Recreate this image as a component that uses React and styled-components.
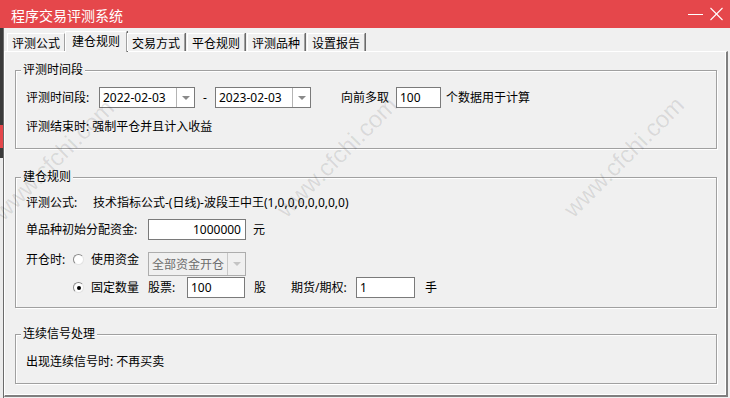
import React from 'react';
import styled, { createGlobalStyle } from 'styled-components';

const Global = createGlobalStyle`
  html, body { margin: 0; padding: 0; background: #f0f0f0; }
  body {
    font-family: "Noto Sans", "Noto Sans CJK SC", sans-serif;
    font-size: 12px;
    color: #000;
  }
  * { box-sizing: border-box; }
`;

const Window = styled.div`
  position: relative;
  width: 730px;
  height: 398px;
  overflow: hidden;
  background: #f0f0f0;
  display: flex;
  flex-direction: column;
`;

const TitleBar = styled.div`
  height: 28px;
  flex: none;
  background: #e5474b;
  display: flex;
  align-items: center;
  padding-left: 11px;
  color: #fff;
`;

const Title = styled.div`
  flex: 1;
  font-family: "Noto Sans CJK SC", sans-serif;
  font-size: 14px;
  line-height: 28px;
  padding-top: 1px;
`;

const Controls = styled.div`
  display: flex;
  align-items: center;
  gap: 6px;
  padding-right: 7px;
`;

const Body = styled.div`
  flex: 1;
  display: flex;
  min-height: 0;
`;

const LeftStrip = styled.div`
  width: 4px;
  flex: none;
  border-right: 1px solid #6b6b6b;
  background: linear-gradient(
    to bottom,
    #3a3a3a 0 97px,
    #e5474b 97px 120px,
    #3a3a3a 120px 130px,
    #ececec 130px
  );
`;

const Main = styled.div`
  flex: 1;
  display: flex;
  flex-direction: column;
  padding: 0 2px 1px 0;
`;

const TabStrip = styled.div`
  position: relative;
  z-index: 1;
  height: 23px;
  flex: none;
  display: flex;
  align-items: flex-end;
  padding-left: 3px;
`;

const Tab = styled.div`
  width: ${p => (p.$active ? 62 : 58)}px;
  height: ${p => (p.$active ? 21 : 18)}px;
  margin: 0 ${p => (p.$active ? 0 : 2)}px ${p => (p.$active ? -1 : 0)}px ${p => (p.$active ? -2 : 0)}px;
  background: #f0f0f0;
  border-top: 1px solid #fff;
  border-left: 1px solid #fff;
  border-right: 1px solid #a0a0a0;
  box-shadow: 1px 0 0 #6a6a6a;
  display: flex;
  justify-content: center;
  align-items: center;
  padding-top: ${p => (p.$active ? 0 : 2)}px;
  line-height: 16px;
  white-space: nowrap;
`;

const Panel = styled.div`
  flex: 1;
  border-top: 1px solid #fff;
  border-left: 1px solid #fff;
  border-right: 2px solid #7f7f7f;
  border-bottom: 2px solid #7f7f7f;
  box-shadow: inset -1px -1px 0 #fff;
  padding: 18px 9px 0 10px;
  display: flex;
  flex-direction: column;
`;

const Group = styled.div`
  position: relative;
  margin-top: ${p => p.$mt || 0}px;
  border: 1px solid #a0a0a0;
  box-shadow: inset 1px 1px 0 #fff, 1px 1px 0 #fff;
  padding: ${p => p.$pt}px 10px ${p => p.$pb}px 10px;
  display: flex;
  flex-direction: column;
`;

const Legend = styled.span`
  position: absolute;
  top: -9px;
  left: 5px;
  padding: 0 2px;
  background: #f0f0f0;
  line-height: 16px;
  white-space: nowrap;
`;

const Row = styled.div`
  display: flex;
  align-items: ${p => (p.$top ? 'flex-start' : 'center')};
  height: ${p => p.$h}px;
  margin-top: ${p => p.$mt || 0}px;
`;

const Text = styled.span`
  flex: none;
  width: ${p => (p.$w ? `${p.$w}px` : 'auto')};
  margin-left: ${p => p.$ml || 0}px;
  line-height: 20px;
  white-space: nowrap;
  text-align: ${p => p.$align || 'left'};
`;

const Field = styled.div`
  flex: none;
  width: ${p => p.$w}px;
  height: 21px;
  margin-left: ${p => p.$ml || 0}px;
  border: 1px solid #7a7a7a;
  background: #fff;
  display: flex;
  align-items: center;
  justify-content: ${p => (p.$right ? 'flex-end' : 'flex-start')};
  padding: 0 ${p => (p.$right ? 4 : 3)}px 0 3px;
  white-space: nowrap;
`;

const Combo = styled.div`
  flex: none;
  width: ${p => p.$w}px;
  height: ${p => p.$h || 21}px;
  margin-left: ${p => p.$ml || 0}px;
  margin-top: ${p => p.$mt || 0}px;
  border: 1px solid ${p => (p.$disabled ? '#adadad' : '#7a7a7a')};
  background: ${p => (p.$disabled ? '#f0f0f0' : '#fff')};
  color: ${p => (p.$disabled ? '#6d6d6d' : '#000')};
  display: flex;
`;

const ComboText = styled.div`
  flex: 1;
  display: flex;
  align-items: center;
  padding-left: 3px;
  white-space: nowrap;
  overflow: hidden;
`;

const ComboButton = styled.div`
  width: 18px;
  flex: none;
  border-left: 1px solid ${p => (p.$disabled ? '#c8c8c8' : '#b4b4b4')};
  display: flex;
  align-items: center;
  justify-content: center;
`;

const Arrow = styled.span`
  width: 0;
  height: 0;
  border-left: 4px solid transparent;
  border-right: 4px solid transparent;
  border-top: 4px solid ${p => (p.$disabled ? '#c4c4c4' : '#8a8a8a')};
`;

const Radio = styled.span`
  flex: none;
  position: relative;
  width: 11px;
  height: 11px;
  margin-left: ${p => p.$ml || 0}px;
  margin-top: ${p => p.$mt || 0}px;
  border-radius: 50%;
  border: 1px solid;
  border-color: #8a8a8a #e3e3e3 #e3e3e3 #8a8a8a;
  background: #fff;
  &::after {
    content: '';
    display: ${p => (p.$checked ? 'block' : 'none')};
    position: absolute;
    left: 2.5px;
    top: 2.5px;
    width: 4px;
    height: 4px;
    border-radius: 50%;
    background: #000;
  }
`;

const Watermark = styled.span`
  position: absolute;
  left: ${p => p.$x}px;
  top: ${p => p.$y}px;
  transform: translate(-50%, -50%) rotate(-45deg);
  font-family: "Liberation Sans", sans-serif;
  font-size: 24px;
  color: rgba(0, 0, 0, 0.1);
  white-space: nowrap;
  pointer-events: none;
  z-index: 5;
`;

const tabs = ['评测公式', '建仓规则', '交易方式', '平仓规则', '评测品种', '设置报告'];

function DropCombo({ w, h, ml, mt, disabled, children }) {
  return (
    <Combo $w={w} $h={h} $ml={ml} $mt={mt} $disabled={disabled}>
      <ComboText>{children}</ComboText>
      <ComboButton $disabled={disabled}>
        <Arrow $disabled={disabled} />
      </ComboButton>
    </Combo>
  );
}

export default function App() {
  return (
    <Window>
      <Global />
      <TitleBar>
        <Title>程序交易评测系统</Title>
        <Controls>
          <svg width="16" height="28" viewBox="0 0 16 28">
            <line x1="0" y1="14.5" x2="15" y2="14.5" stroke="#fff" strokeWidth="1" />
          </svg>
          <svg width="13" height="28" viewBox="0 0 13 28">
            <line x1="0.5" y1="8" x2="12.5" y2="20" stroke="#fff" strokeWidth="1.1" />
            <line x1="12.5" y1="8" x2="0.5" y2="20" stroke="#fff" strokeWidth="1.1" />
          </svg>
        </Controls>
      </TitleBar>
      <Body>
        <LeftStrip />
        <Main>
          <TabStrip>
            {tabs.map((t, i) => (
              <Tab key={t} $active={i === 1}>{t}</Tab>
            ))}
          </TabStrip>
          <Panel>
            <Group $pt={16} $pb={11}>
              <Legend>评测时间段</Legend>
              <Row $h={21}>
                <Text $w={73}>评测时间段:</Text>
                <DropCombo w={96}>2022-02-03</DropCombo>
                <Text $w={20} $align="center">-</Text>
                <DropCombo w={96}>2023-02-03</DropCombo>
                <Text $ml={30} $w={55}>向前多取</Text>
                <Field $w={45}>100</Field>
                <Text $ml={5}>个数据用于计算</Text>
              </Row>
              <Row $h={20} $mt={9}>
                <Text>评测结束时: 强制平仓并且计入收益</Text>
              </Row>
            </Group>

            <Group $mt={28} $pt={15} $pb={9}>
              <Legend>建仓规则</Legend>
              <Row $h={20}>
                <Text $w={67}>评测公式:</Text>
                <Text>技术指标公式-(日线)-波段王中王(1,0,0,0,0,0,0,0)</Text>
              </Row>
              <Row $h={21} $mt={6}>
                <Text $w={122}>单品种初始分配资金:</Text>
                <Field $w={98} $right>1000000</Field>
                <Text $ml={7}>元</Text>
              </Row>
              <Row $h={26} $mt={10} $top>
                <Text $w={47}>开仓时:</Text>
                <Radio $mt={4} />
                <Text $ml={7} $w={57}>使用资金</Text>
                <DropCombo w={98} h={24} mt={2} disabled>全部资金开仓</DropCombo>
              </Row>
              <Row $h={21} $mt={1}>
                <Radio $ml={47} $checked />
                <Text $ml={7} $w={57}>固定数量</Text>
                <Text $w={39}>股票:</Text>
                <Field $w={58}>100</Field>
                <Text $ml={9}>股</Text>
                <Text $ml={25} $w={65}>期货/期权:</Text>
                <Field $w={59}>1</Field>
                <Text $ml={10}>手</Text>
              </Row>
            </Group>

            <Group $mt={26} $pt={17} $pb={11}>
              <Legend>连续信号处理</Legend>
              <Row $h={20}>
                <Text>出现连续信号时: 不再买卖</Text>
              </Row>
            </Group>
          </Panel>
        </Main>
      </Body>
      <Watermark $x={54} $y={160}>www.cfchi.com</Watermark>
      <Watermark $x={337} $y={157}>www.cfchi.com</Watermark>
      <Watermark $x={624} $y={157}>www.cfchi.com</Watermark>
    </Window>
  );
}
